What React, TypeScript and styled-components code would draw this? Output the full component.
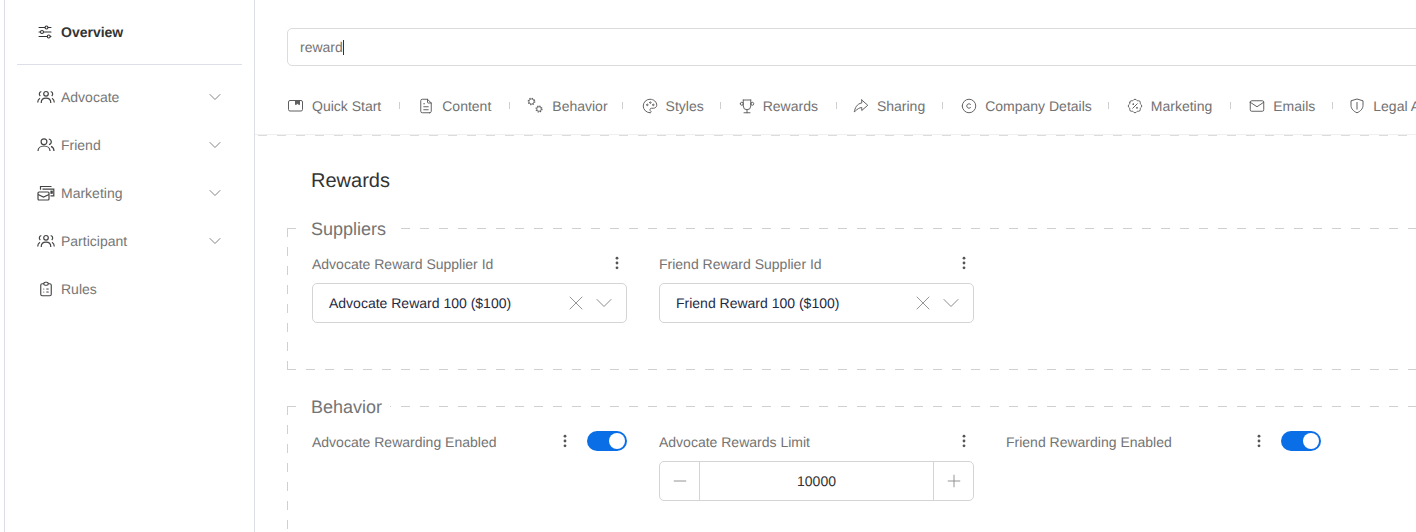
import styled, { createGlobalStyle } from 'styled-components';
import { Fragment, ReactNode } from 'react';
import {
  TbAdjustmentsHorizontal,
  TbChevronDown,
  TbClipboardList,
  TbCopyright,
  TbFileText,
  TbMail,
  TbMinus,
  TbPalette,
  TbPlus,
  TbRosetteDiscount,
  TbShare3,
  TbTrophy,
  TbX,
} from 'react-icons/tb';

const GlobalStyle = createGlobalStyle`
  html, body {
    margin: 0;
    padding: 0;
    height: 100%;
    background: #fff;
    overflow: hidden;
  }

  body {
    font-family: "Liberation Sans", Arial, sans-serif;
    font-size: 14px;
    color: #737373;
    text-rendering: geometricPrecision;
  }

  * {
    box-sizing: border-box;
  }
`;

const QuickStartIcon = () => (
  <svg viewBox="0 0 18 18" fill="none" stroke="currentColor" strokeWidth="1">
    <rect x="1.5" y="3.500" width="14" height="10.500" rx="1.500" />
    <path d="M8.500 3.500v4.100l2-1 2 1V3.500z" fill="currentColor" />
  </svg>
);

const GearsIcon = () => (
  <svg viewBox="0 0 18 18" fill="none" stroke="currentColor">
    <circle cx="4.500" cy="4.500" r="2.600" strokeWidth="0.9" />
    <circle cx="4.500" cy="4.500" r="3.300" strokeWidth="1.100" strokeDasharray="1.300 1.290" />
    <circle cx="12" cy="12" r="2.300" strokeWidth="0.9" />
    <circle cx="12" cy="12" r="3" strokeWidth="1.100" strokeDasharray="1.300 1.060" />
  </svg>
);

const ShieldIcon = () => (
  <svg viewBox="0 0 18 18" fill="none" stroke="currentColor" strokeWidth="1">
    <path d="M9 2 15 3.800v4.600c0 3.400-2.700 6-6 7.400-3.300-1.400-6-4-6-7.400V3.800z" />
    <path d="M9 5v7.600" />
  </svg>
);

const GroupIcon = () => (
  <svg width="18" height="14" viewBox="0 0 18 14" fill="none" stroke="currentColor" strokeWidth="1.200">
    <circle cx="9" cy="3.800" r="2.300" />
    <path d="M4.200 13c0-3 2.100-4.800 4.800-4.800s4.800 1.800 4.800 4.800" />
    <path d="M4.300 1.500C3 1.800 2.300 2.800 2.300 4c0 .8.400 1.500 1 2M13.700 1.500c1.300.3 2 1.300 2 2.500 0 .8-.4 1.500-1 2" />
    <path d="M.7 12.500c0-2 .8-3.400 2.300-4.200M17.300 12.500c0-2-.8-3.400-2.300-4.200" />
  </svg>
);

const FriendIcon = () => (
  <svg width="18" height="14" viewBox="0 0 18 14" fill="none" stroke="currentColor" strokeWidth="1.200">
    <circle cx="7" cy="3.700" r="2.900" />
    <path d="M1 13c0-3 2.600-5 6-5s6 2 6 5" />
    <path d="M11.800 1c1.500.3 2.500 1.400 2.500 2.800s-1 2.500-2.300 2.800" />
    <path d="M17 13c0-2.300-1-3.800-3-4.600" />
  </svg>
);

const CampaignIcon = () => (
  <svg width="18" height="18" viewBox="0 0 18 18" fill="none" stroke="currentColor" strokeWidth="1.200">
    <path d="M3.500 5.800V2.500h11" />
    <path d="M5.500 5.200h11.300v6.600h-3.300" />
    <rect x="1" y="8" width="11" height="8" rx="1" />
    <path d="M1 10.500 6.500 13l5.500-2.500" />
    <path d="M14 7.200h1.200v2H14z" fill="currentColor" />
  </svg>
);

const MoreIcon = () => (
  <svg width="4" height="14" viewBox="0 0 4 14" fill="#555">
    <circle cx="2" cy="2.200" r="1.400" />
    <circle cx="2" cy="7" r="1.400" />
    <circle cx="2" cy="11.800" r="1.400" />
  </svg>
);

const dash = (color: string) =>
  `repeating-linear-gradient(90deg, ${color} 0 9px, transparent 9px 19px)`;
const dashDown = (color: string) =>
  `repeating-linear-gradient(180deg, ${color} 0 9px, transparent 9px 19px)`;

const Shell = styled.div`
  display: flex;
  height: 532px;
  padding-left: 4px;
  overflow: hidden;
`;

const Sidebar = styled.aside`
  flex: 0 0 251px;
  padding: 8px 12px 0;
  border-left: 1px solid #dcdee3;
  border-right: 1px solid #dcdee3;
`;

const OverviewRow = styled.div`
  display: flex;
  align-items: center;
  gap: 7px;
  height: 48px;
  padding-left: 19px;
  font-weight: 700;
  font-size: 14px;
  color: #333;
`;

const SideDivider = styled.hr`
  margin: 8px 0;
  border: 0;
  border-top: 1px solid #dde0e8;
`;

const SideItem = styled.div`
  display: flex;
  align-items: center;
  height: 48px;
  padding: 0 17px 0 20px;
  color: #767676;
  font-size: 14px;

  > svg:first-child {
    flex: 0 0 18px;
    margin-right: 6px;
    color: #444;
  }

  span {
    flex: 1;
  }
`;

const Chevron = styled(TbChevronDown)`
  color: #777;
`;

const Main = styled.main`
  flex: 1;
  min-width: 0;
  overflow: hidden;
`;

const SearchBar = styled.div`
  width: 1160px;
  height: 38px;
  margin: 28px 0 0 32px;
  padding: 0 12px;
  display: flex;
  align-items: center;
  border: 1px solid #dcdcdc;
  border-radius: 5px;
  font-size: 14px;
  color: #747474;
`;

const Caret = styled.i`
  width: 1px;
  height: 15px;
  background: #333;
`;

const TabBar = styled.nav`
  display: flex;
  align-items: center;
  height: 69px;
  padding: 11px 0 0 32px;
  border-bottom: 1px solid #f0f0f0;
  white-space: nowrap;
`;

const Tab = styled.div<{ $end: number }>`
  display: flex;
  align-items: center;
  flex: 0 0 auto;
  gap: 7px;
  color: #727272;
  padding-right: ${(p) => p.$end}px;

  svg {
    flex: none;
    width: 18px;
    height: 18px;
    color: #5f5f5f;
  }
`;

const TabSeparator = styled.i<{ $after: number }>`
  flex: none;
  width: 1px;
  height: 7px;
  margin-right: ${(p) => p.$after}px;
  background: #cfcfcf;
`;

const Content = styled.section`
  padding: 33px 0 0 32px;
  background: ${dash('#dcdcdc')} 3px 0 / 100% 1px no-repeat;
`;

const Title = styled.h2`
  margin: 0 0 34px 24px;
  font-size: 20px;
  line-height: 26px;
  font-weight: 400;
  color: #333;
`;

const Group = styled.div<{ $height: number }>`
  width: 1300px;
  height: ${(p) => p.$height}px;
  margin-bottom: 36px;
  background:
    ${dash('#d0d0d0')} 0 0 / 100% 1px no-repeat,
    ${dash('#d0d0d0')} 0 100% / 100% 1px no-repeat,
    ${dashDown('#d0d0d0')} 0 0 / 1px 100% no-repeat;
`;

const Legend = styled.div`
  width: fit-content;
  height: 20px;
  margin: 0 0 -9px 16px;
  padding: 0 8px;
  position: relative;
  top: -9px;
  background: #fff;
  font-size: 18px;
  line-height: 20px;
  color: #747474;
`;

const Fields = styled.div`
  display: flex;
  gap: 32px;
  padding: 10px 0 0 25px;
`;

const Field = styled.div`
  width: 315px;
`;

const LabelRow = styled.div`
  display: flex;
  align-items: center;
  height: 30px;
  font-size: 14px;
  color: #737373;

  span {
    flex: 1;
  }
`;

const MoreButton = styled.button<{ $gap?: number }>`
  display: flex;
  align-items: center;
  padding: 0;
  margin: -2px ${(p) => p.$gap ?? 8}px 0 0;
  border: 0;
  background: none;
`;

const Select = styled.div`
  display: flex;
  align-items: center;
  height: 40px;
  margin-top: 4px;
  padding: 0 8px 0 16px;
  gap: 2px;
  border: 1px solid #d4d4d4;
  border-radius: 5px;
  color: #1f2a44;

  span {
    flex: 1;
  }

  svg {
    color: #8a8a8a;
  }
`;

const Toggle = styled.div`
  width: 40px;
  height: 20px;
  margin-top: -2px;
  padding: 2px;
  display: flex;
  justify-content: flex-end;
  border-radius: 10px;
  background: #0a6fe6;

  &::after {
    content: '';
    width: 16px;
    height: 16px;
    border-radius: 50%;
    background: #fff;
  }
`;

const Stepper = styled.div`
  display: flex;
  align-items: stretch;
  height: 40px;
  margin-top: 4px;
  border: 1px solid #d4d4d4;
  border-radius: 5px;
  color: #333;
`;

const StepButton = styled.div`
  flex: 0 0 39px;
  display: flex;
  align-items: center;
  justify-content: center;
  color: #8a8a8a;
`;

const StepValue = styled.div`
  flex: 1;
  display: flex;
  align-items: center;
  justify-content: center;
  border-left: 1px solid #d4d4d4;
  border-right: 1px solid #d4d4d4;
`;

const sideItems: { label: string; icon: ReactNode; chevron: boolean }[] = [
  { label: 'Advocate', icon: <GroupIcon />, chevron: true },
  { label: 'Friend', icon: <FriendIcon />, chevron: true },
  { label: 'Marketing', icon: <CampaignIcon />, chevron: true },
  { label: 'Participant', icon: <GroupIcon />, chevron: true },
  { label: 'Rules', icon: <TbClipboardList size={18} strokeWidth={1.5} />, chevron: false },
];

const tabs: { label: string; icon: ReactNode; end: number; after: number }[] = [
  { label: 'Quick Start', icon: <QuickStartIcon />, end: 18, after: 17 },
  { label: 'Content', icon: <TbFileText strokeWidth={1.3} />, end: 18, after: 17 },
  { label: 'Behavior', icon: <GearsIcon />, end: 14, after: 18 },
  { label: 'Styles', icon: <TbPalette strokeWidth={1.3} />, end: 16, after: 17 },
  { label: 'Rewards', icon: <TbTrophy strokeWidth={1.3} />, end: 18, after: 15 },
  { label: 'Sharing', icon: <TbShare3 strokeWidth={1.3} />, end: 17, after: 17 },
  { label: 'Company Details', icon: <TbCopyright strokeWidth={1.3} />, end: 16, after: 17 },
  { label: 'Marketing', icon: <TbRosetteDiscount strokeWidth={1.3} />, end: 18, after: 17 },
  { label: 'Emails', icon: <TbMail strokeWidth={1.3} />, end: 17, after: 15 },
  { label: 'Legal Agreements', icon: <ShieldIcon />, end: 16, after: 0 },
];

export default function App() {
  return (
    <>
      <GlobalStyle />
      <Shell>
        <Sidebar>
          <OverviewRow>
            <TbAdjustmentsHorizontal size={18} strokeWidth={1.4} />
            Overview
          </OverviewRow>
          <SideDivider />
          {sideItems.map((item) => (
            <SideItem key={item.label}>
              {item.icon}
              <span>{item.label}</span>
              {item.chevron && <Chevron size={20} strokeWidth={1.1} />}
            </SideItem>
          ))}
        </Sidebar>
        <Main>
          <SearchBar>
            reward
            <Caret />
          </SearchBar>
          <TabBar>
            {tabs.map((tab, i) => (
              <Fragment key={tab.label}>
                <Tab $end={tab.end}>
                  {tab.icon}
                  {tab.label}
                </Tab>
                {i < tabs.length - 1 && <TabSeparator $after={tab.after} />}
              </Fragment>
            ))}
          </TabBar>
          <Content>
            <Title>Rewards</Title>
            <Group $height={142}>
              <Legend>Suppliers</Legend>
              <Fields>
                <Field>
                  <LabelRow>
                    <span>Advocate Reward Supplier Id</span>
                    <MoreButton><MoreIcon /></MoreButton>
                  </LabelRow>
                  <Select>
                    <span>Advocate Reward 100 ($100)</span>
                    <TbX size={24} strokeWidth={0.9} />
                    <TbChevronDown size={28} strokeWidth={0.85} />
                  </Select>
                </Field>
                <Field>
                  <LabelRow>
                    <span>Friend Reward Supplier Id</span>
                    <MoreButton><MoreIcon /></MoreButton>
                  </LabelRow>
                  <Select>
                    <span>Friend Reward 100 ($100)</span>
                    <TbX size={24} strokeWidth={0.9} />
                    <TbChevronDown size={28} strokeWidth={0.85} />
                  </Select>
                </Field>
              </Fields>
            </Group>
            <Group $height={200}>
              <Legend>Behavior</Legend>
              <Fields>
                <Field>
                  <LabelRow>
                    <span>Advocate Rewarding Enabled</span>
                    <MoreButton $gap={20}><MoreIcon /></MoreButton>
                    <Toggle />
                  </LabelRow>
                </Field>
                <Field>
                  <LabelRow>
                    <span>Advocate Rewards Limit</span>
                    <MoreButton><MoreIcon /></MoreButton>
                  </LabelRow>
                  <Stepper>
                    <StepButton><TbMinus size={20} strokeWidth={1.1} /></StepButton>
                    <StepValue>10000</StepValue>
                    <StepButton><TbPlus size={20} strokeWidth={1.1} /></StepButton>
                  </Stepper>
                </Field>
                <Field>
                  <LabelRow>
                    <span>Friend Rewarding Enabled</span>
                    <MoreButton $gap={20}><MoreIcon /></MoreButton>
                    <Toggle />
                  </LabelRow>
                </Field>
              </Fields>
            </Group>
          </Content>
        </Main>
      </Shell>
    </>
  );
}
